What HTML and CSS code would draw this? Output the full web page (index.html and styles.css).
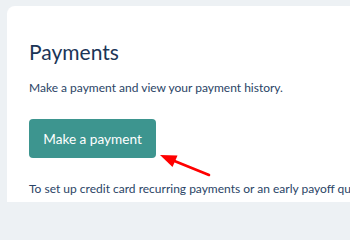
FILE: index.html
```html
<!DOCTYPE html>
<html>
<head>
<meta charset="utf-8">
<link rel="stylesheet" href="styles.css">
</head>
<body>
<div class="card">
  <h1 class="title">Payments</h1>
  <p class="lead">Make a payment and view your payment history.</p>
  <div class="action">
    <button class="btn">Make a payment</button>
    <svg class="arrow" width="60" height="30" viewBox="0 0 60 30">
      <line x1="12" y1="5" x2="49" y2="20" stroke="#ff0000" stroke-width="2.6" stroke-linecap="round"/>
      <polygon points="0,0 17.5,0.5 12.5,12" fill="#ff0000"/>
    </svg>
  </div>
  <p class="note">To set up credit card recurring payments or an early payoff quote, please contact us.</p>
</div>
</body>
</html>
```
FILE: styles.css
```css
html, body {
  margin: 0;
  padding: 0;
  background: #edf1f4;
  overflow: hidden;
}
body {
  width: 350px;
  height: 202px;
  font-family: "Lato", "Open Sans", sans-serif;
}
.card {
  margin: 6px 0 0 7px;
  background: #ffffff;
  border-top-left-radius: 8px;
  padding: 31px 0 0 22px;
  height: 196px;
  box-sizing: border-box;
  white-space: nowrap;
  overflow: hidden;
}
.title {
  margin: 0;
  font-size: 21px;
  line-height: 30px;
  font-weight: 400;
  color: #1b3557;
}
.lead {
  margin: 12px 0 0;
  font-size: 12px;
  line-height: 18px;
  color: #2a4466;
}
.action {
  position: relative;
  margin-top: 22px;
  height: 39px;
}
.btn {
  display: block;
  width: 127px;
  height: 39px;
  border: 0;
  border-radius: 4px;
  background: #3d958f;
  color: #ffffff;
  font-family: "Lato", "Open Sans", sans-serif;
  font-size: 13.6px;
  padding: 0;
}
.arrow {
  position: absolute;
  left: 131px;
  top: 36px;
  overflow: visible;
}
.note {
  margin: 22px 0 0;
  font-size: 12px;
  line-height: 18px;
  color: #2a4466;
}
```
